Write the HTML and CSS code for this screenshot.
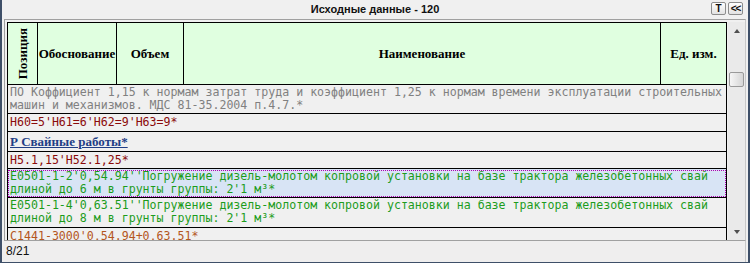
FILE: index.html
```html
<!DOCTYPE html>
<html lang="ru">
<head>
<meta charset="utf-8">
<link rel="stylesheet" href="styles.css">
</head>
<body>
<div class="window">
  <div class="titlebar">
    <div></div>
    <div class="title">Исходные данные - 120</div>
    <div class="btns"><span class="btn btn-t">T</span><span class="btn btn-c">&lt;&lt;</span></div>
  </div>
  <div class="panel">
    <div class="grid">
      <div class="head">
        <div class="hc c1"><span class="vert">Позиция</span></div>
        <div class="hc c2">Обоснование</div>
        <div class="hc c3">Объем</div>
        <div class="hc c4">Наименование</div>
        <div class="hc c5">Ед. изм.</div>
      </div>
      <div class="row two gray">ПО Коффициент 1,15 к нормам затрат труда и коэффициент 1,25 к нормам времени эксплуатации строительных<br>машин и механизмов. МДС 81-35.2004 п.4.7.*</div>
      <div class="row one red">Н60=5'Н61=6'Н62=9'Н63=9*</div>
      <div class="row sect"><span class="link">Р Свайные работы*</span></div>
      <div class="row one red r4">Н5.1,15'Н52.1,25*</div>
      <div class="row two green sel">Е0501-1-2'0,54.94''Погружение дизель-молотом копровой установки на базе трактора железобетонных свай<br>длиной до 6 м в грунты группы: 2'1 м³*</div>
      <div class="row two green r6">Е0501-1-4'0,63.51''Погружение дизель-молотом копровой установки на базе трактора железобетонных свай<br>длиной до 8 м в грунты группы: 2'1 м³*</div>
      <div class="row one brown">С1441-3000'0,54.94+0,63.51*</div>
    </div>
    <div class="scrollbar">
      <div class="sb-btn"><span class="arr up"></span></div>
      <div class="sb-track"><div class="thumb"></div></div>
      <div class="sb-btn"><span class="arr down"></span></div>
    </div>
  </div>
  <div class="status">8/21</div>
</div>
</body>
</html>
```
FILE: styles.css
```css
html, body {
  margin: 0;
  padding: 0;
  background: #f0f0f0;
}

.window {
  width: 750px;
  height: 263px;
  box-sizing: border-box;
  border-left: 2px solid #3e4f68;
  border-right: 2px solid #3e4f68;
  border-bottom: 1px solid #3e4f68;
  background: #f0f0f0;
  display: flex;
  flex-direction: column;
  overflow: hidden;
}

.titlebar {
  height: 19px;
  display: grid;
  grid-template-columns: 1fr auto 1fr;
  align-items: center;
}

.title {
  font-family: "Liberation Sans", Arial, sans-serif;
  font-weight: bold;
  font-size: 11px;
  line-height: 19px;
  color: #111;
}

.btns {
  justify-self: end;
  display: flex;
  gap: 2px;
  margin-right: 5px;
  margin-top: -2px;
}

.btn {
  width: 13px;
  height: 11px;
  border: 1px solid #8c8c8c;
  border-radius: 2px;
  background: linear-gradient(#ffffff, #e2e2e2);
  font-family: "Liberation Sans", Arial, sans-serif;
  font-weight: bold;
  font-size: 10px;
  line-height: 11px;
  text-align: center;
  color: #111;
}

.btn-c {
  letter-spacing: -1px;
  font-size: 10px;
}

.panel {
  margin-left: 2px;
  margin-right: 2px;
  height: 222px;
  box-sizing: border-box;
  border-top: 1px solid #a0a0a0;
  border-left: 1px solid #a0a0a0;
  border-right: 1px solid #c8c8c8;
  border-bottom: 1px solid #a0a0a0;
  padding: 2px 0 0 2px;
  display: flex;
  gap: 1px;
}

.grid {
  width: 720px;
  height: 218px;
  overflow: hidden;
  flex: none;
}

.head {
  display: flex;
  height: 63px;
  box-sizing: border-box;
  border: 1px solid #000;
  background: #e0ffe0;
  font-family: "Liberation Serif", "Times New Roman", serif;
  font-weight: bold;
  font-size: 13px;
  color: #000;
}

.hc {
  display: flex;
  align-items: center;
  justify-content: center;
  border-right: 1px solid #000;
  flex: none;
}

.c1 { width: 29px; }
.c2 { width: 78px; }
.c3 { width: 66px; }
.c4 { width: 476px; }
.c5 { width: 65px; border-right: none; }

.vert {
  writing-mode: vertical-rl;
  transform: rotate(180deg);
}

.row {
  border-left: 1px solid #000;
  border-right: 1px solid #000;
  border-bottom: 1px solid #000;
  font-family: "DejaVu Sans Mono", monospace;
  font-size: 11.6px;
  line-height: 13px;
  white-space: nowrap;
  padding: 1px 2px;
}

.row.one {
  padding: 2px 2px 2px;
}

.row.r4 {
  padding: 2px 2px 1px;
}

.row.r6 {
  padding: 1px 2px 2px;
}

.row.sect {
  padding: 2px 2px 2px;
  line-height: 15px;
  font-family: "Liberation Serif", "Times New Roman", serif;
  font-weight: bold;
  font-size: 13px;
}

.link {
  color: #1f3e86;
  text-decoration: underline;
}

.gray { color: #808080; }
.red { color: #8b0a0a; }
.green { color: #1c9c1c; }
.brown { color: #b4561e; }

.sel {
  background: #d8e4f5;
  outline: 1px dotted #b000b0;
  outline-offset: -2px;
}

.scrollbar {
  width: 17px;
  height: 218px;
  flex: none;
  display: flex;
  flex-direction: column;
  background: #eaeaea;
}

.sb-btn {
  height: 17px;
  display: flex;
  align-items: center;
  justify-content: center;
  flex: none;
}

.sb-track {
  flex: 1;
  padding-top: 33px;
  display: flex;
  flex-direction: column;
  align-items: center;
}

.thumb {
  width: 13px;
  height: 13px;
  border: 1px solid #9a9a9a;
  border-radius: 2px;
  background: linear-gradient(90deg, #f6f6f6, #e6e6e6 50%, #d6d6d6);
}

.arr {
  width: 0;
  height: 0;
  border-left: 3.5px solid transparent;
  border-right: 3.5px solid transparent;
}

.arr.up {
  border-bottom: 4px solid #505050;
}

.arr.down {
  border-top: 4px solid #505050;
}

.status {
  height: 21px;
  box-sizing: border-box;
  margin-left: 1px;
  margin-right: 2px;
  border-right: 1px solid #c8c8c8;
  padding-left: 3px;
  font-family: "Liberation Sans", Arial, sans-serif;
  font-size: 12px;
  line-height: 21px;
  color: #111;
  background: #efeeee;
}
```
